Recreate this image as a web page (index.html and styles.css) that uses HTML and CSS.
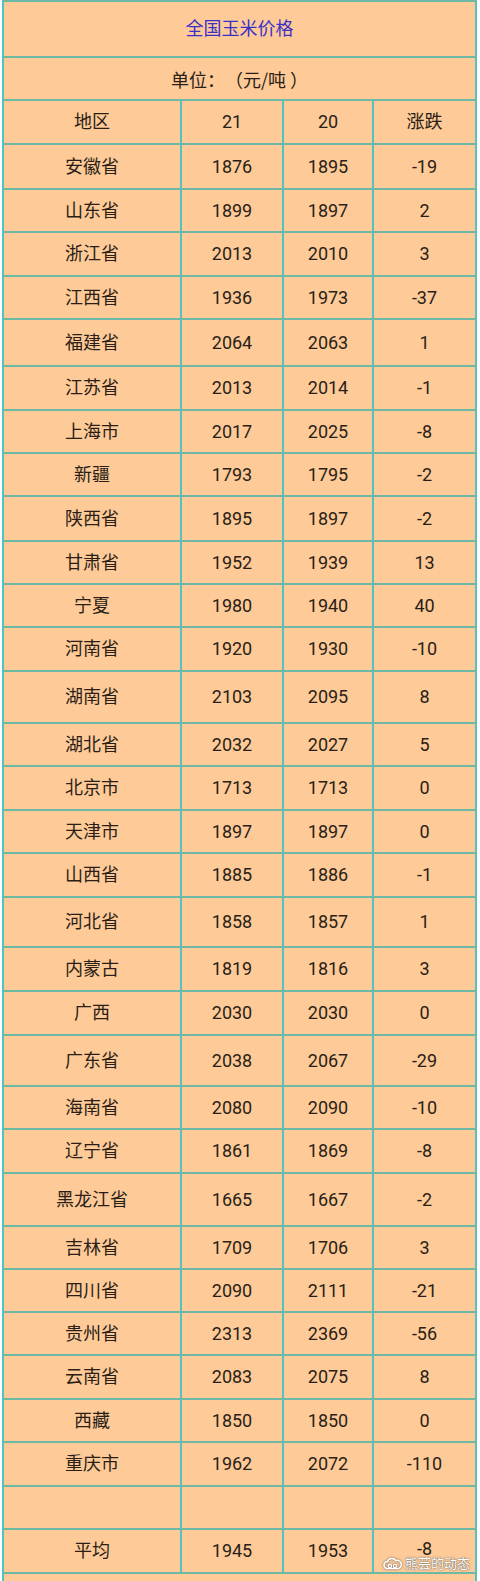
FILE: index.html
```html
<!DOCTYPE html>
<html lang="zh-CN">
<head>
<meta charset="utf-8">
<title>全国玉米价格</title>
<link rel="stylesheet" href="styles.css">
</head>
<body>
<div class="sheet">
  <div class="tbl">
    <div class="row full h56"><div class="cell title">全国玉米价格</div></div>
    <div class="row full h43"><div class="cell unit">单位：（元/吨 ）</div></div>
    <div class="row h44"><div class="cell">地区</div><div class="cell">21</div><div class="cell">20</div><div class="cell">涨跌</div></div>
    <div class="row h45"><div class="cell">安徽省</div><div class="cell">1876</div><div class="cell">1895</div><div class="cell">-19</div></div>
    <div class="row h43"><div class="cell">山东省</div><div class="cell">1899</div><div class="cell">1897</div><div class="cell">2</div></div>
    <div class="row h44"><div class="cell">浙江省</div><div class="cell">2013</div><div class="cell">2010</div><div class="cell">3</div></div>
    <div class="row h43"><div class="cell">江西省</div><div class="cell">1936</div><div class="cell">1973</div><div class="cell">-37</div></div>
    <div class="row h47"><div class="cell">福建省</div><div class="cell">2064</div><div class="cell">2063</div><div class="cell">1</div></div>
    <div class="row h44"><div class="cell">江苏省</div><div class="cell">2013</div><div class="cell">2014</div><div class="cell">-1</div></div>
    <div class="row h43"><div class="cell">上海市</div><div class="cell">2017</div><div class="cell">2025</div><div class="cell">-8</div></div>
    <div class="row h43"><div class="cell">新疆</div><div class="cell">1793</div><div class="cell">1795</div><div class="cell">-2</div></div>
    <div class="row h45"><div class="cell">陕西省</div><div class="cell">1895</div><div class="cell">1897</div><div class="cell">-2</div></div>
    <div class="row h43"><div class="cell">甘肃省</div><div class="cell">1952</div><div class="cell">1939</div><div class="cell">13</div></div>
    <div class="row h43"><div class="cell">宁夏</div><div class="cell">1980</div><div class="cell">1940</div><div class="cell">40</div></div>
    <div class="row h44"><div class="cell">河南省</div><div class="cell">1920</div><div class="cell">1930</div><div class="cell">-10</div></div>
    <div class="row h52"><div class="cell">湖南省</div><div class="cell">2103</div><div class="cell">2095</div><div class="cell">8</div></div>
    <div class="row h43"><div class="cell">湖北省</div><div class="cell">2032</div><div class="cell">2027</div><div class="cell">5</div></div>
    <div class="row h44"><div class="cell">北京市</div><div class="cell">1713</div><div class="cell">1713</div><div class="cell">0</div></div>
    <div class="row h43"><div class="cell">天津市</div><div class="cell">1897</div><div class="cell">1897</div><div class="cell">0</div></div>
    <div class="row h44"><div class="cell">山西省</div><div class="cell">1885</div><div class="cell">1886</div><div class="cell">-1</div></div>
    <div class="row h50"><div class="cell">河北省</div><div class="cell">1858</div><div class="cell">1857</div><div class="cell">1</div></div>
    <div class="row h44"><div class="cell">内蒙古</div><div class="cell">1819</div><div class="cell">1816</div><div class="cell">3</div></div>
    <div class="row h44"><div class="cell">广西</div><div class="cell">2030</div><div class="cell">2030</div><div class="cell">0</div></div>
    <div class="row h51"><div class="cell">广东省</div><div class="cell">2038</div><div class="cell">2067</div><div class="cell">-29</div></div>
    <div class="row h43"><div class="cell">海南省</div><div class="cell">2080</div><div class="cell">2090</div><div class="cell">-10</div></div>
    <div class="row h44"><div class="cell">辽宁省</div><div class="cell">1861</div><div class="cell">1869</div><div class="cell">-8</div></div>
    <div class="row h53"><div class="cell">黑龙江省</div><div class="cell">1665</div><div class="cell">1667</div><div class="cell">-2</div></div>
    <div class="row h43"><div class="cell">吉林省</div><div class="cell">1709</div><div class="cell">1706</div><div class="cell">3</div></div>
    <div class="row h43"><div class="cell">四川省</div><div class="cell">2090</div><div class="cell">2111</div><div class="cell">-21</div></div>
    <div class="row h43"><div class="cell">贵州省</div><div class="cell">2313</div><div class="cell">2369</div><div class="cell">-56</div></div>
    <div class="row h44"><div class="cell">云南省</div><div class="cell">2083</div><div class="cell">2075</div><div class="cell">8</div></div>
    <div class="row h43"><div class="cell">西藏</div><div class="cell">1850</div><div class="cell">1850</div><div class="cell">0</div></div>
    <div class="row h44"><div class="cell">重庆市</div><div class="cell">1962</div><div class="cell">2072</div><div class="cell">-110</div></div>
    <div class="row h43"><div class="cell"></div><div class="cell"></div><div class="cell"></div><div class="cell"></div></div>
    <div class="row h44"><div class="cell">平均</div><div class="cell">1945</div><div class="cell">1953</div><div class="cell up">-8</div></div>
    <div class="row full tail"><div class="cell"></div></div>
  </div>
  <div class="mark">
    <svg class="mark-icon" width="20" height="12" viewBox="0 0 20 12" aria-hidden="true">
      <path d="M4.5 10.5 A3.5 3.5 0 0 1 4.5 3.5 A4.5 4.5 0 0 1 12.5 2.5 A3.6 3.6 0 0 1 15.5 10.5 Z" fill="none" stroke="#ffffff" stroke-width="1.6"/>
      <circle cx="7" cy="8" r="1.6" fill="none" stroke="#ffffff" stroke-width="1.3"/>
      <circle cx="12" cy="8" r="1.6" fill="none" stroke="#ffffff" stroke-width="1.3"/>
    </svg>
    <span class="mark-text">熊芸的动态</span>
  </div>
</div>
</body>
</html>
```

FILE: styles.css
```css
html, body {
  margin: 0;
  padding: 0;
  background: #ffffff;
}

body {
  font-family: Roboto, "Noto Sans CJK SC", "Noto Sans", sans-serif;
  color: #2a1e16;
  font-size: 18px;
}

.sheet {
  position: relative;
  width: 480px;
  height: 1581px;
  overflow: hidden;
}

.tbl {
  margin-left: 2px;
  width: 475px;
  box-sizing: border-box;
  border-left: 2px solid #50c4c2;
  border-top: 2px solid #6cb9a6;
  background: #fdca98;
}

.row {
  display: grid;
  grid-template-columns: 178px 102px 90px 103px;
  box-sizing: border-box;
  border-bottom: 2px solid #6cb9a6;
}

.row.full {
  grid-template-columns: 473px;
}

.cell {
  display: flex;
  align-items: center;
  justify-content: center;
  box-sizing: border-box;
  border-right: 2px solid #50c4c2;
  white-space: nowrap;
  line-height: 1;
}

.title {
  color: #3a30c8;
}

.unit {
  font-family: "Noto Sans CJK SC", Roboto, sans-serif;
  text-spacing-trim: space-all;
}

.up {
  padding-bottom: 4px;
}

.h43 { height: 43px; }
.h44 { height: 44px; }
.h45 { height: 45px; }
.h47 { height: 47px; }
.h50 { height: 50px; }
.h51 { height: 51px; }
.h52 { height: 52px; }
.h53 { height: 53px; }
.h56 { height: 56px; }

.row.tail {
  height: 7px;
  border-bottom: none;
}

.mark {
  position: absolute;
  left: 383px;
  top: 1557px;
  display: flex;
  align-items: center;
  gap: 2px;
}

.mark-icon {
  display: block;
  filter: drop-shadow(0 0 1px rgba(60, 60, 60, 0.8));
}

.mark-text {
  font-size: 13px;
  line-height: 1;
  color: #ffffff;
  text-shadow: 0 0 1px #555555, 0 0 2px rgba(80, 80, 80, 0.7);
}
```
